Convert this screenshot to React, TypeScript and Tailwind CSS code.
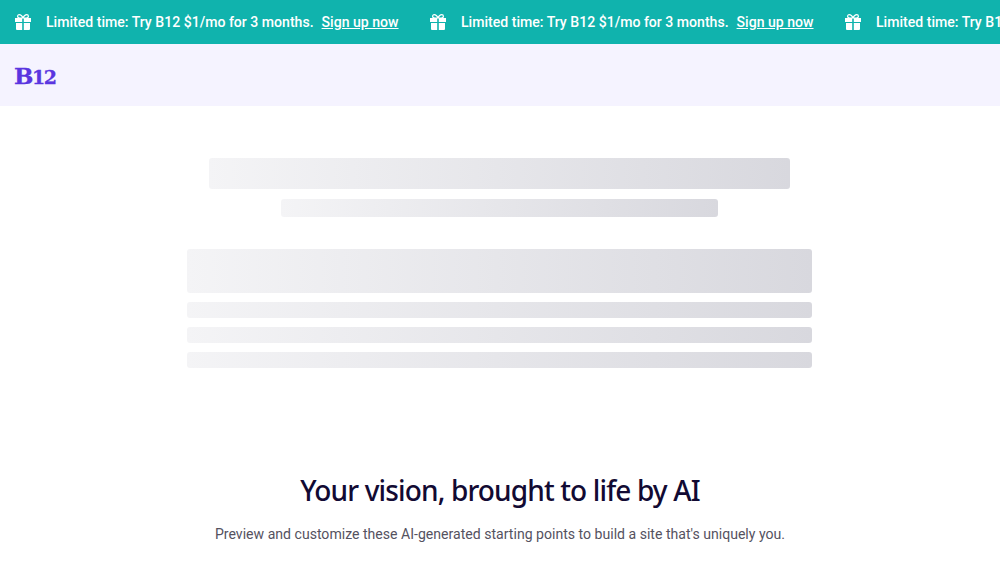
import React from 'react';

const GiftIcon = () => (
  <svg viewBox="0 0 16 16" className="h-[16px] w-[16px] flex-shrink-0 text-white" fill="currentColor">
    <path d="M0 4h7.2v4H0zM8.8 4H16v4H8.8zM1 9h6.2v7H2a1 1 0 0 1-1-1zM8.8 9H15v6a1 1 0 0 1-1 1H8.8z" />
    <path d="M8 4C7 1.6 5.6.6 4.3.6 3.2.6 2.6 1.3 2.6 2.3 2.6 3.4 3.5 4 4.8 4H8ZM8 4c1-2.4 2.4-3.4 3.7-3.4 1.1 0 1.7.7 1.7 1.7 0 1.1-.9 1.7-2.2 1.7H8Z" fill="none" stroke="currentColor" strokeWidth="1.2" />
  </svg>
);

const PromoItem = () => (
  <div className="flex items-center flex-shrink-0 w-[415px] pl-[15px]">
    <GiftIcon />
    <span className="ml-[15px] pt-[1px] text-[14.08px] font-medium text-white whitespace-nowrap">Limited time: Try B12 $1/mo for 3 months.</span>
    <a className="ml-[8px] pt-[1px] text-[14.08px] font-medium text-white underline whitespace-nowrap">Sign up now</a>
  </div>
);

const Bar = ({ className }: { className: string }) => (
  <div className={`rounded-[3px] bg-gradient-to-r from-[#f4f4f6] to-[#d8d8de] ${className}`} />
);

export default function App() {
  return (
    <div className="h-[563px] overflow-hidden bg-white font-['Roboto',sans-serif]">
      <div className="flex h-[44px] overflow-hidden bg-[#10b3ad]">
        <PromoItem />
        <PromoItem />
        <PromoItem />
      </div>

      <header className="flex h-[62px] items-center bg-[#f5f3ff] pl-[14px]">
        <span className="font-['DejaVu_Serif',serif] text-[23px] font-bold leading-none tracking-[-1.5px] text-[#5a35e0] [-webkit-text-stroke:0.3px_#5a35e0]">
          B<span className="text-[19px]">12</span>
        </span>
      </header>

      <main className="ml-[187px] w-[625px] pt-[52px]">
        <div className="flex flex-col items-center gap-[10px]">
          <Bar className="h-[31px] w-[581px]" />
          <Bar className="h-[18px] w-[437px]" />
        </div>
        <div className="mt-[32px] flex flex-col gap-[9px]">
          <Bar className="h-[44px]" />
          <Bar className="h-[16px]" />
          <Bar className="h-[16px]" />
          <Bar className="h-[16px]" />
        </div>
      </main>

      <section className="pt-[102px] text-center">
        <h1 className="font-['Noto_Sans',sans-serif] text-[28px] font-medium leading-[40px] tracking-[-0.86px] text-[#120a33]">Your vision, brought to life by AI</h1>
        <p className="mt-[14px] text-[14.08px] leading-[20px] text-[#55525f]">Preview and customize these AI-generated starting points to build a site that's uniquely you.</p>
      </section>
    </div>
  );
}
